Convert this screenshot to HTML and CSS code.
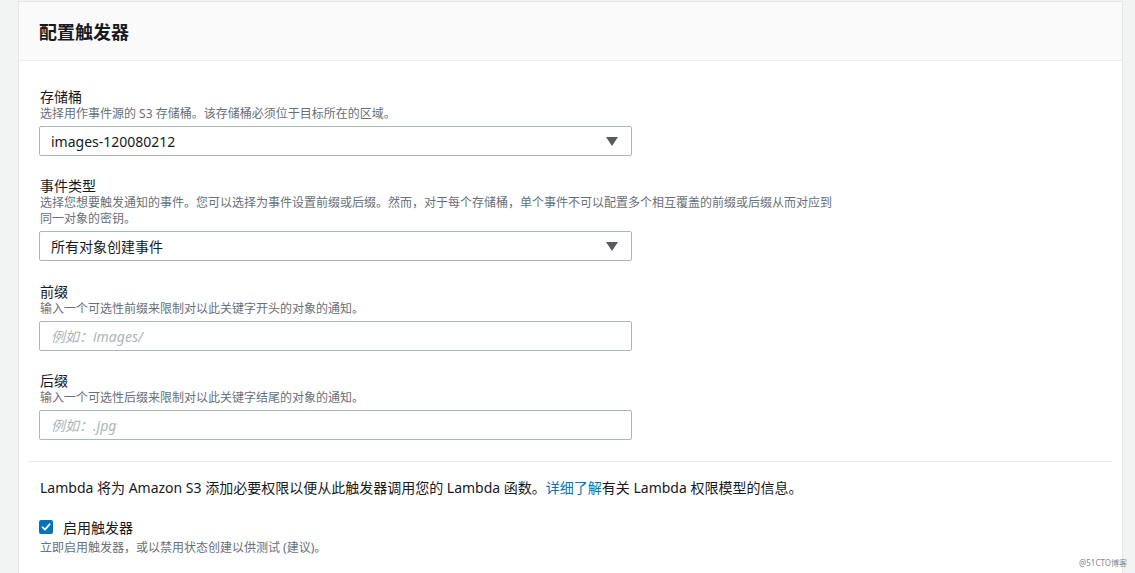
FILE: index.html
```html
<!DOCTYPE html>
<html>
<head>
    <meta charset="utf-8">
    <link rel="stylesheet" href="styles.css">
</head>
<body>
    <div class="page">
        <!-- Карточка настройки триггера -->
        <div class="card">
            <div class="card-header">
                <h2>配置触发器</h2>
            </div>

            <div class="card-body">
                <div class="field">
                    <label>存储桶</label>
                    <p class="hint">选择用作事件源的 S3 存储桶。该存储桶必须位于目标所在的区域。</p>
                    <div class="select">
                        <span>images-120080212</span>
                        <svg width="12" height="9" viewBox="0 0 12 9"><path d="M0 0 H12 L6 9 Z" fill="#545b64"/></svg>
                    </div>
                </div>

                <div class="field">
                    <label>事件类型</label>
                    <p class="hint">选择您想要触发通知的事件。您可以选择为事件设置前缀或后缀。然而，对于每个存储桶，单个事件不可以配置多个相互覆盖的前缀或后缀从而对应到同一对象的密钥。</p>
                    <div class="select">
                        <span>所有对象创建事件</span>
                        <svg width="12" height="9" viewBox="0 0 12 9"><path d="M0 0 H12 L6 9 Z" fill="#545b64"/></svg>
                    </div>
                </div>

                <div class="field">
                    <label>前缀</label>
                    <p class="hint">输入一个可选性前缀来限制对以此关键字开头的对象的通知。</p>
                    <input type="text" placeholder="例如：images/">
                </div>

                <div class="field">
                    <label>后缀</label>
                    <p class="hint">输入一个可选性后缀来限制对以此关键字结尾的对象的通知。</p>
                    <input type="text" placeholder="例如：.jpg">
                </div>
            </div>

            <div class="divider"></div>

            <div class="card-body bottom">
                <p class="info">Lambda 将为 Amazon S3 添加必要权限以便从此触发器调用您的 Lambda 函数。<a href="#">详细了解</a>有关 Lambda 权限模型的信息。</p>

                <div class="check-row">
                    <span class="checkbox">
                        <svg width="10" height="10" viewBox="0 0 10 10"><path d="M1.5 5.2 L4 7.6 L8.6 2.3" fill="none" stroke="#fff" stroke-width="1.8" stroke-linecap="round" stroke-linejoin="round"/></svg>
                    </span>
                    <span class="check-label">启用触发器</span>
                </div>
                <p class="hint">立即启用触发器，或以禁用状态创建以供测试 (建议)。</p>
            </div>
        </div>
    </div>

    <div class="watermark">@51CTO博客</div>
</body>
</html>
```

FILE: styles.css
```css
html, body {
  margin: 0;
  height: 100%;
}

body {
  font-family: "Noto Sans", "Noto Sans CJK SC", sans-serif;
  background-color: #f2f3f3;
  color: #16191f;
  overflow: hidden;
}

.page {
  height: 100%;
  box-sizing: border-box;
  padding: 1px 12px 0 18px;
}

.card {
  background-color: #fff;
  border: 1px solid #e4e7e7;
  border-bottom: none;
  height: 100%;
  box-sizing: border-box;
}

.card-header {
  background-color: #fafafa;
  border-bottom: 1px solid #eaeded;
  height: 58px;
  display: flex;
  align-items: center;
  padding-left: 20px;
}

.card-header h2 {
  margin: 0;
  font-size: 18px;
  font-weight: bold;
  color: #16191f;
}

.card-body {
  padding: 27px 20px 0 20px;
}

.field {
  margin-bottom: 21px;
}

.field:last-child {
  margin-bottom: 0;
}

label {
  display: block;
  font-size: 14px;
  line-height: 18px;
  padding-left: 1px;
}

.hint {
  margin: 0;
  font-size: 12px;
  line-height: 16px;
  color: #687078;
  max-width: 798px;
  padding-left: 1px;
}

.select, input[type="text"] {
  box-sizing: border-box;
  width: 593px;
  height: 30px;
  margin-top: 4px;
  border: 1px solid #aab7b8;
  border-radius: 2px;
  background-color: #fff;
  font-family: inherit;
  font-size: 14px;
}

.select {
  display: flex;
  align-items: center;
  justify-content: space-between;
  padding: 0 13px 0 11px;
  color: #16191f;
}

input[type="text"] {
  display: block;
  padding: 0 11px;
  outline: none;
}

.field:nth-child(3) {
  padding-top: 1px;
}

input[type="text"]::placeholder {
  color: #aab7b8;
  font-style: italic;
}

.divider {
  height: 1px;
  background-color: #eaeded;
  margin: 21px 9px 0 9px;
}

.card-body.bottom {
  padding-top: 17px;
}

.info {
  margin: 0 0 20px 1px;
  font-size: 14px;
  line-height: 18px;
}

.info a {
  color: #0073bb;
  text-decoration: none;
}

.check-row {
  display: flex;
  align-items: center;
  gap: 10px;
  height: 20px;
  margin-top: 1px;
  margin-bottom: 3px;
}

.checkbox {
  width: 14px;
  height: 14px;
  border-radius: 2px;
  background-color: #0073bb;
  display: flex;
  align-items: center;
  justify-content: center;
}

.check-label {
  font-size: 14px;
}

.watermark {
  position: absolute;
  right: 8px;
  bottom: 5px;
  font-size: 8px;
  color: #888;
}
```
